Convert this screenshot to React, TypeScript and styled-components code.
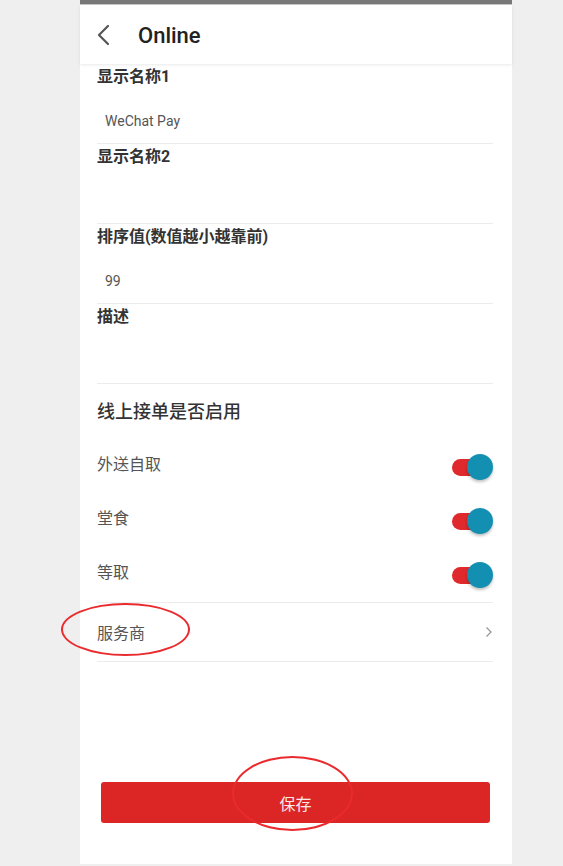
import React from "react";
import styled, { createGlobalStyle } from "styled-components";

const Global = createGlobalStyle`
  html, body { margin: 0; padding: 0; background: #efefef; }
  body { font-family: Roboto, "Noto Sans CJK SC", sans-serif; }
  * { box-sizing: border-box; }
`;

const Page = styled.div`
  width: 563px;
  height: 866px;
  background: #efefef;
  position: relative;
  overflow: hidden;
`;

const Phone = styled.div`
  margin-left: 80px;
  width: 432px;
  height: 864px;
  background: #fff;
  display: flex;
  flex-direction: column;
`;

const StatusBar = styled.div`
  height: 5px;
  background: #787878;
  border-bottom: 1px solid #c8c8c8;
`;

const Header = styled.div`
  height: 59px;
  display: flex;
  align-items: center;
  padding-left: 16px;
  gap: 26px;
  box-shadow: 0 1px 3px rgba(0, 0, 0, 0.09);
  position: relative;
  z-index: 1;
`;

const Title = styled.div`
  font-family: Roboto, sans-serif;
  font-weight: 500;
  font-size: 22px;
  color: #222;
  margin-top: 1px;
`;

const Form = styled.div`
  padding: 0 19px 0 17px;
  display: flex;
  flex-direction: column;
`;

const Field = styled.div`
  height: 80px;
  border-bottom: 1px solid #ececec;
`;

const Label = styled.div`
  font-size: 16px;
  font-weight: 700;
  color: #333;
  line-height: 26px;
`;

const Value = styled.div`
  margin-top: 20px;
  padding-left: 8px;
  font-size: 14px;
  color: #555;
  line-height: 22px;
  height: 22px;
`;

const SectionTitle = styled.div`
  height: 56px;
  line-height: 56px;
  font-size: 18px;
  font-weight: 500;
  color: #333;
`;

const SwitchRow = styled.div`
  height: 54px;
  display: flex;
  align-items: center;
  justify-content: space-between;
`;

const RowText = styled.div`
  font-size: 16px;
  color: #555;
  margin-bottom: 8px;
`;

const Toggle = styled.div`
  position: relative;
  width: 41px;
  height: 26px;
  display: flex;
  align-items: center;
`;

const Track = styled.div`
  width: 33px;
  height: 17px;
  border-radius: 9px;
  background: #e0292c;
`;

const Knob = styled.div`
  position: absolute;
  right: 0;
  top: 0;
  width: 26px;
  height: 26px;
  border-radius: 50%;
  background: #128fb1;
  box-shadow: 0 2px 3px rgba(0, 0, 0, 0.25);
`;

const LinkRow = styled.div`
  height: 60px;
  border-top: 1px solid #ececec;
  border-bottom: 1px solid #ececec;
  display: flex;
  align-items: center;
  justify-content: space-between;
`;

const LinkText = styled.div`
  font-size: 16px;
  color: #555;
`;

const Footer = styled.div`
  margin-top: auto;
  padding: 0 22px 41px 21px;
`;

const SaveButton = styled.button`
  width: 100%;
  height: 41px;
  border: none;
  border-radius: 3px;
  background: #dc2626;
  color: #fbe9e9;
  font-family: Roboto, "Noto Sans CJK SC", sans-serif;
  font-size: 16px;
`;

const Ellipse = styled.div<{ $x: number; $y: number; $w: number; $h: number }>`
  position: absolute;
  left: ${(p) => p.$x}px;
  top: ${(p) => p.$y}px;
  width: ${(p) => p.$w}px;
  height: ${(p) => p.$h}px;
  border: 2px solid #ea2b2e;
  border-radius: 50%;
  pointer-events: none;
`;

const BackIcon = () => (
  <svg width="16" height="22" viewBox="0 0 16 22">
    <path d="M12 2 L3 11 L12 20" fill="none" stroke="#555" strokeWidth="2.2" strokeLinecap="round" strokeLinejoin="round" />
  </svg>
);

const Chevron = () => (
  <svg width="8" height="12" viewBox="0 0 8 12">
    <path d="M1.5 1.5 L6 6 L1.5 10.5" fill="none" stroke="#999" strokeWidth="1.3" />
  </svg>
);

const Switch = () => (
  <Toggle>
    <Track />
    <Knob />
  </Toggle>
);

const fields = [
  { label: "显示名称1", value: "WeChat Pay" },
  { label: "显示名称2", value: "" },
  { label: "排序值(数值越小越靠前)", value: "99" },
  { label: "描述", value: "" },
];

const switches = ["外送自取", "堂食", "等取"];

export default function App() {
  return (
    <Page>
      <Global />
      <Phone>
        <StatusBar />
        <Header>
          <BackIcon />
          <Title>Online</Title>
        </Header>
        <Form>
          {fields.map((f) => (
            <Field key={f.label}>
              <Label>{f.label}</Label>
              <Value>{f.value}</Value>
            </Field>
          ))}
          <SectionTitle>线上接单是否启用</SectionTitle>
          {switches.map((s) => (
            <SwitchRow key={s}>
              <RowText>{s}</RowText>
              <Switch />
            </SwitchRow>
          ))}
          <LinkRow>
            <LinkText>服务商</LinkText>
            <Chevron />
          </LinkRow>
        </Form>
        <Footer>
          <SaveButton>保存</SaveButton>
        </Footer>
      </Phone>
      <Ellipse $x={61} $y={603} $w={129} $h={53} />
      <Ellipse $x={232} $y={756} $w={121} $h={75} />
    </Page>
  );
}
